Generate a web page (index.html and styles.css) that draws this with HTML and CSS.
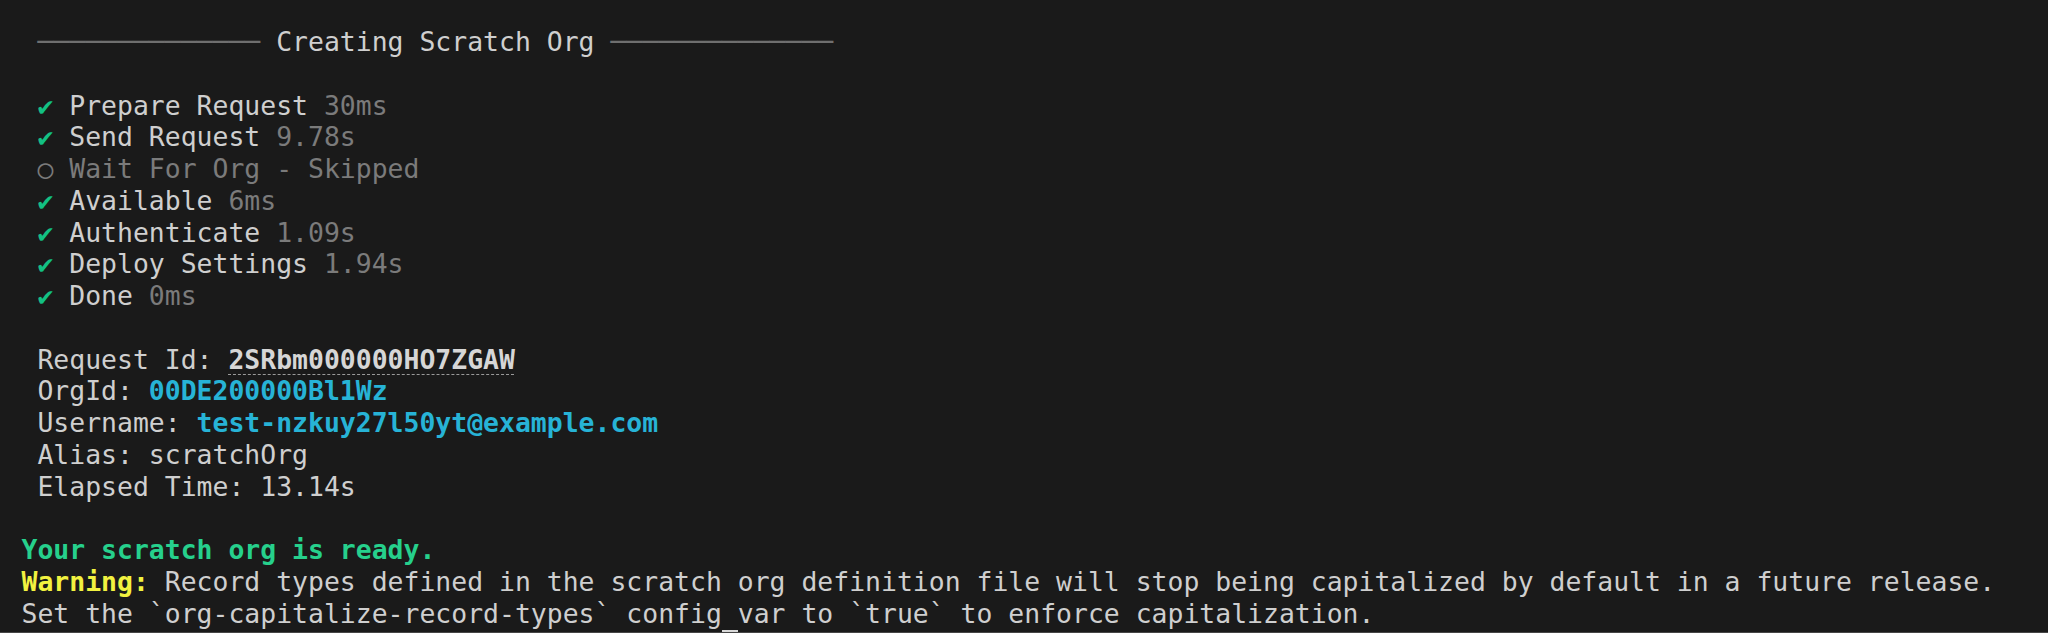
FILE: index.html
```html
<!DOCTYPE html>
<html>
<head>
<meta charset="utf-8">
<link rel="stylesheet" href="styles.css">
</head>
<body>
<div class="term">
<div class="row"> <span class="rule">──────────────</span> Creating Scratch Org <span class="rule">──────────────</span></div>
<div class="row"> </div>
<div class="row"> <span class="ok">✔</span> Prepare Request <span class="dim">30ms</span></div>
<div class="row"> <span class="ok">✔</span> Send Request <span class="dim">9.78s</span></div>
<div class="row dim"> ○ Wait For Org - Skipped</div>
<div class="row"> <span class="ok">✔</span> Available <span class="dim">6ms</span></div>
<div class="row"> <span class="ok">✔</span> Authenticate <span class="dim">1.09s</span></div>
<div class="row"> <span class="ok">✔</span> Deploy Settings <span class="dim">1.94s</span></div>
<div class="row"> <span class="ok">✔</span> Done <span class="dim">0ms</span></div>
<div class="row"> </div>
<div class="row"> Request Id: <span class="link">2SRbm000000HO7ZGAW</span></div>
<div class="row"> OrgId: <span class="cyan">00DE200000Bl1Wz</span></div>
<div class="row"> Username: <span class="cyan">test-nzkuy27l50yt@example.com</span></div>
<div class="row"> Alias: scratchOrg</div>
<div class="row"> Elapsed Time: 13.14s</div>
<div class="row"> </div>
<div class="row ready">Your scratch org is ready.</div>
<div class="row"><span class="warn">Warning:</span> Record types defined in the scratch org definition file will stop being capitalized by default in a future release.</div>
<div class="row">Set the `org-capitalize-record-types` config var to `true` to enforce capitalization.</div>
<div class="row"><span class="cursor"> </span></div>
</div>
</body>
</html>
```

FILE: styles.css
```css
html, body {
  margin: 0;
  padding: 0;
  background: #1a1a1a;
}

.term {
  box-sizing: border-box;
  height: 633px;
  overflow: hidden;
  padding: 26px 0 0 21.5px;
  border-bottom: 1px solid #464646;
  background: #1a1a1a;
  color: #cfcfcf;
  font-family: "DejaVu Sans Mono", "Liberation Mono", monospace;
  font-size: 26.45px;
  line-height: 31.78px;
}

.row {
  white-space: pre;
  height: 31.78px;
}

.rule {
  color: #6f6f6f;
}

.ok {
  color: #13c083;
}

.dim {
  color: #7b7b7b;
}

.cyan {
  color: #27b3d6;
  font-weight: bold;
}

.link {
  font-weight: bold;
  color: #d6d6d6;
  text-decoration: underline dashed #9a9a9a;
  text-decoration-thickness: 1px;
  text-underline-offset: 5px;
}

.ready {
  color: #26d08c;
  font-weight: bold;
}

.warn {
  color: #f2f240;
  font-weight: bold;
}

.cursor {
  display: inline-block;
  width: 1ch;
  height: 31px;
  margin-left: 44ch;
  background: #d9d9d9;
  vertical-align: top;
}
```
